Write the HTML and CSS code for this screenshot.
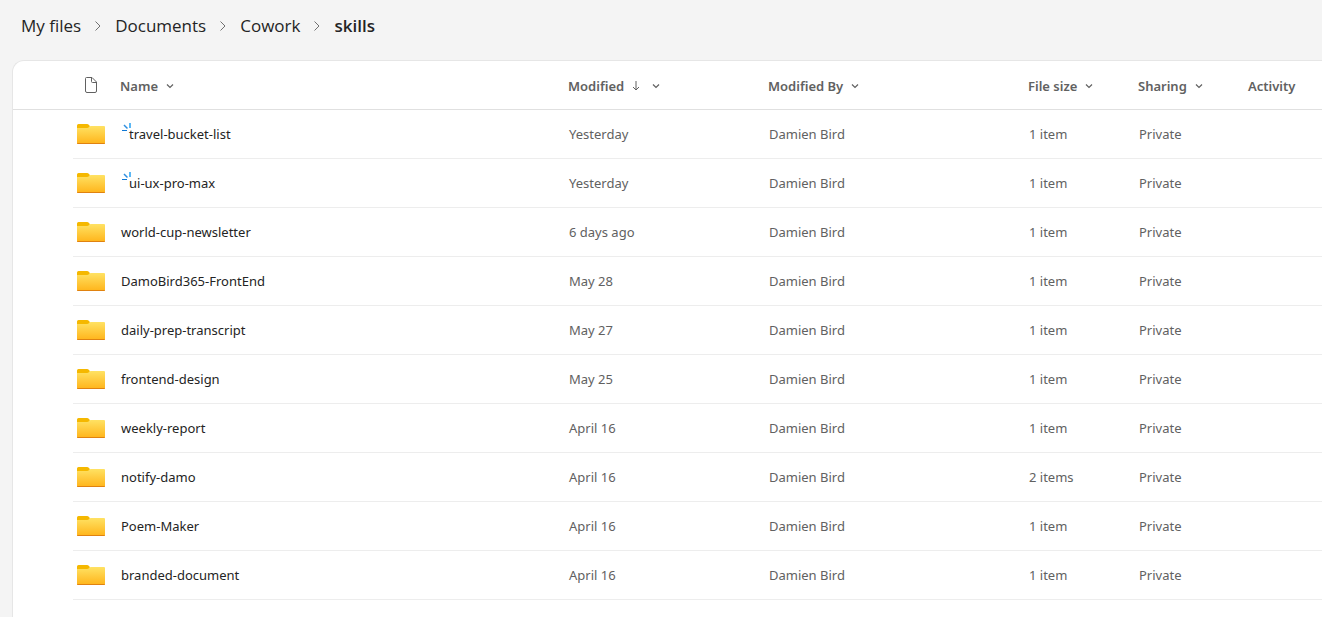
FILE: index.html
```html
<!DOCTYPE html>
<html lang="en">
<head>
  <meta charset="UTF-8" />
  <meta name="viewport" content="width=device-width, initial-scale=1.0"/>
  <title>skills - My files</title>
  <link rel="stylesheet" href="styles.css">
</head>
<body>
  <!-- Shared icons -->
  <svg class="sprite" aria-hidden="true">
    <defs>
      <linearGradient id="folderFill" x1="0" y1="0" x2="0" y2="1">
        <stop offset="0" stop-color="#ffe263"/>
        <stop offset="1" stop-color="#ffb41a"/>
      </linearGradient>
    </defs>
    <symbol id="folder" viewBox="0 0 28 20">
      <path d="M0 1.5Q0 0 1.5 0H10Q11.2 0 12 1L13 2.2L11 6H0z" fill="#f5b800"/>
      <path d="M0 4H10Q11.500 4 12 3Q12.600 2 14 2H27Q28 2 28 3V19Q28 20 27 20H1Q0 20 0 19z" fill="url(#folderFill)"/>
      <path d="M0 19H28Q28 20 27 20H1Q0 20 0 19z" fill="#e08210"/>
    </symbol>
    <symbol id="chevron-down" viewBox="0 0 8 8">
      <path d="M1 2.500L4 5.500L7 2.500" fill="none" stroke="currentColor" stroke-width="1.200"/>
    </symbol>
    <symbol id="chevron-right" viewBox="0 0 8 12">
      <path d="M1.500 1.500L6 6L1.500 10.500" fill="none" stroke="currentColor"/>
    </symbol>
    <symbol id="new-mark" viewBox="0 0 10 10">
      <path d="M0 7.500H5" stroke="#0f78d4" stroke-width="1.200"/>
      <path d="M2 2L5.500 5.500" stroke="#2f8fe0" stroke-width="1.500"/>
      <path d="M8 0V5" stroke="#5cb8f5" stroke-width="2"/>
    </symbol>
  </svg>

  <nav class="breadcrumb" aria-label="Breadcrumb">
    <a href="#">My files</a>
    <svg class="sep"><use href="#chevron-right"/></svg>
    <a href="#">Documents</a>
    <svg class="sep"><use href="#chevron-right"/></svg>
    <a href="#">Cowork</a>
    <svg class="sep"><use href="#chevron-right"/></svg>
    <a href="#" class="current" aria-current="page">skills</a>
  </nav>

  <main class="panel">
    <table class="files">
      <colgroup>
        <col class="col-select">
        <col class="col-icon">
        <col class="col-name">
        <col class="col-modified">
        <col class="col-by">
        <col class="col-size">
        <col class="col-sharing">
        <col>
      </colgroup>
      <thead>
        <tr>
          <th></th>
          <th class="icon">
            <svg class="file-icon" viewBox="0 0 14 18" role="img" aria-label="File type">
              <path d="M2.500 1.500H8L12.500 6V15Q12.500 16.500 11 16.500H3Q1.500 16.500 1.500 15V2.500Q1.500 1.500 2.500 1.500zM7.500 1.500V5.500Q7.500 6.500 8.500 6.500H12.500" fill="none" stroke="currentColor"/>
            </svg>
          </th>
          <th><button>Name <svg class="chevron"><use href="#chevron-down"/></svg></button></th>
          <th>
            <button>Modified
              <svg class="sort" viewBox="0 0 8 10"><path d="M4 0V9M1 6L4 9L7 6" fill="none" stroke="currentColor"/></svg>
              <svg class="chevron"><use href="#chevron-down"/></svg>
            </button>
          </th>
          <th><button>Modified By <svg class="chevron"><use href="#chevron-down"/></svg></button></th>
          <th><button>File size <svg class="chevron"><use href="#chevron-down"/></svg></button></th>
          <th><button>Sharing <svg class="chevron"><use href="#chevron-down"/></svg></button></th>
          <th><button>Activity</button></th>
        </tr>
      </thead>
      <tbody>
        <tr>
          <td></td>
          <td class="icon"><svg class="folder"><use href="#folder"/></svg></td>
          <td><a href="#" class="new"><svg class="new-mark"><use href="#new-mark"/></svg>travel-bucket-list</a></td>
          <td>Yesterday</td>
          <td>Damien Bird</td>
          <td>1 item</td>
          <td>Private</td>
          <td></td>
        </tr>
        <tr>
          <td></td>
          <td class="icon"><svg class="folder"><use href="#folder"/></svg></td>
          <td><a href="#" class="new"><svg class="new-mark"><use href="#new-mark"/></svg>ui-ux-pro-max</a></td>
          <td>Yesterday</td>
          <td>Damien Bird</td>
          <td>1 item</td>
          <td>Private</td>
          <td></td>
        </tr>
        <tr>
          <td></td>
          <td class="icon"><svg class="folder"><use href="#folder"/></svg></td>
          <td><a href="#">world-cup-newsletter</a></td>
          <td>6 days ago</td>
          <td>Damien Bird</td>
          <td>1 item</td>
          <td>Private</td>
          <td></td>
        </tr>
        <tr>
          <td></td>
          <td class="icon"><svg class="folder"><use href="#folder"/></svg></td>
          <td><a href="#">DamoBird365-FrontEnd</a></td>
          <td>May 28</td>
          <td>Damien Bird</td>
          <td>1 item</td>
          <td>Private</td>
          <td></td>
        </tr>
        <tr>
          <td></td>
          <td class="icon"><svg class="folder"><use href="#folder"/></svg></td>
          <td><a href="#">daily-prep-transcript</a></td>
          <td>May 27</td>
          <td>Damien Bird</td>
          <td>1 item</td>
          <td>Private</td>
          <td></td>
        </tr>
        <tr>
          <td></td>
          <td class="icon"><svg class="folder"><use href="#folder"/></svg></td>
          <td><a href="#">frontend-design</a></td>
          <td>May 25</td>
          <td>Damien Bird</td>
          <td>1 item</td>
          <td>Private</td>
          <td></td>
        </tr>
        <tr>
          <td></td>
          <td class="icon"><svg class="folder"><use href="#folder"/></svg></td>
          <td><a href="#">weekly-report</a></td>
          <td>April 16</td>
          <td>Damien Bird</td>
          <td>1 item</td>
          <td>Private</td>
          <td></td>
        </tr>
        <tr>
          <td></td>
          <td class="icon"><svg class="folder"><use href="#folder"/></svg></td>
          <td><a href="#">notify-damo</a></td>
          <td>April 16</td>
          <td>Damien Bird</td>
          <td>2 items</td>
          <td>Private</td>
          <td></td>
        </tr>
        <tr>
          <td></td>
          <td class="icon"><svg class="folder"><use href="#folder"/></svg></td>
          <td><a href="#">Poem-Maker</a></td>
          <td>April 16</td>
          <td>Damien Bird</td>
          <td>1 item</td>
          <td>Private</td>
          <td></td>
        </tr>
        <tr>
          <td></td>
          <td class="icon"><svg class="folder"><use href="#folder"/></svg></td>
          <td><a href="#">branded-document</a></td>
          <td>April 16</td>
          <td>Damien Bird</td>
          <td>1 item</td>
          <td>Private</td>
          <td></td>
        </tr>
      </tbody>
    </table>
  </main>
</body>
</html>
```
FILE: styles.css
```css
* {
  margin: 0;
  padding: 0;
  box-sizing: border-box;
}

body {
  font-family: "Noto Sans", "Open Sans", sans-serif;
  font-size: 13px;
  line-height: 20px;
  color: #242424;
  background: #f4f4f4;
  min-height: 100vh;
  display: flex;
  flex-direction: column;
}

a {
  color: inherit;
  text-decoration: none;
}

a:hover {
  text-decoration: underline;
}

svg {
  display: block;
  flex: none;
}

.sprite {
  position: absolute;
  width: 0;
  height: 0;
}

.breadcrumb {
  display: flex;
  align-items: center;
  gap: 13px;
  height: 60px;
  padding: 0 21px 8px;
  font-family: "Open Sans", "Noto Sans", sans-serif;
  font-size: 17px;
  line-height: 24px;
}

.breadcrumb .current {
  font-weight: 600;
}

.sep {
  width: 8px;
  height: 12px;
  color: #707070;
}

.panel {
  flex: 1;
  margin-left: 12px;
  background: #fff;
  border: 1px solid #e6e6e6;
  border-width: 1px 0 0 1px;
  border-top-left-radius: 12px;
  overflow: hidden;
}

.files {
  width: 100%;
  table-layout: fixed;
  border-collapse: separate;
  border-spacing: 0;
}

.col-select { width: 60px; }
.col-icon { width: 39px; }
.col-name { width: 448px; }
.col-modified { width: 200px; }
.col-by { width: 260px; }
.col-size { width: 110px; }
.col-sharing { width: 110px; }

th, td {
  height: 49px;
  padding-left: 8px;
  text-align: left;
  vertical-align: middle;
  white-space: nowrap;
  color: #616161;
  border-bottom: 1px solid #ededed;
}

th {
  border-bottom-color: #e0e0e0;
}

td {
  padding-left: 9px;
}

td:first-child {
  border-bottom: none;
}

th.icon, td.icon {
  padding-left: 4px;
}

td a {
  color: #242424;
}

th button {
  display: flex;
  align-items: center;
  gap: 8px;
  padding-top: 2px;
  border: none;
  background: none;
  font: inherit;
  font-weight: 600;
  line-height: 20px;
  color: inherit;
  cursor: pointer;
}

.chevron {
  width: 8px;
  height: 8px;
}

.sort {
  width: 8px;
  height: 10px;
  margin-right: 4px;
}

.file-icon {
  width: 14px;
  height: 18px;
  margin-left: 7px;
}

.folder {
  width: 28px;
  height: 20px;
}

.new {
  position: relative;
  padding-left: 8px;
}

/* small burst over the first letter of recently added items */
.new-mark {
  position: absolute;
  top: -2px;
  left: 1px;
  width: 10px;
  height: 10px;
}
```
